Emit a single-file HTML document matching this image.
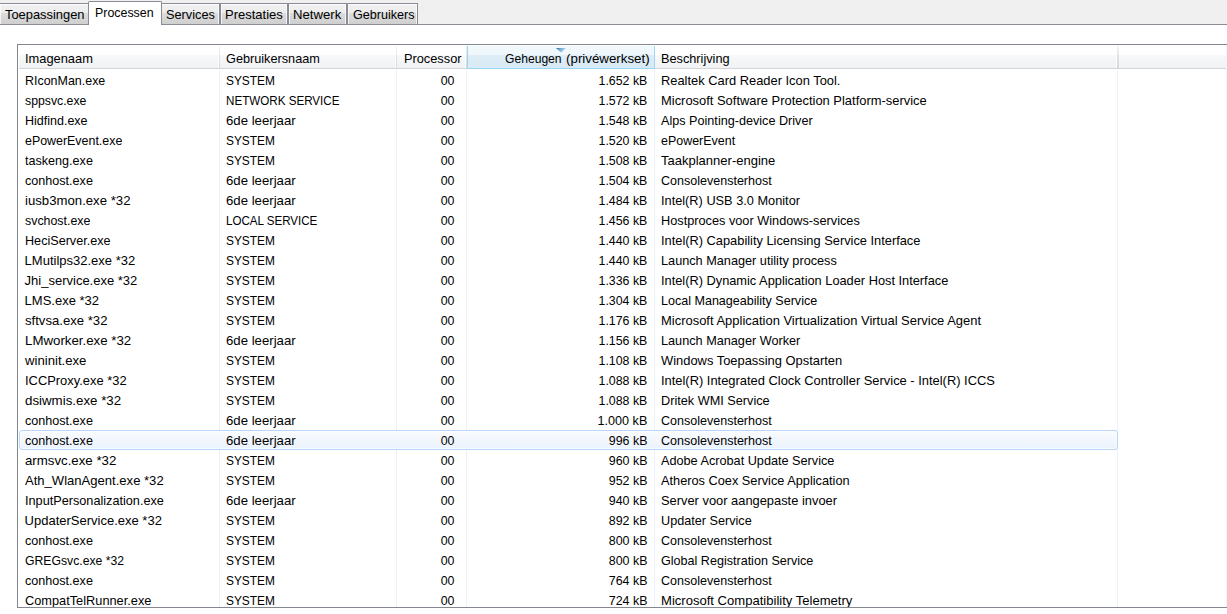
<!DOCTYPE html><html><head><meta charset="utf-8"><title>Taakbeheer</title><style>
html,body{margin:0;padding:0;overflow:hidden}
body{width:1227px;height:614px;overflow:hidden;position:relative;background:#fff;font-family:"Liberation Sans",sans-serif;font-size:13px;color:#000;}
.a{position:absolute;white-space:nowrap}
#strip{left:0;top:0;width:1227px;height:24px;background:#f0f0f0}
#strip-line{left:0;top:24px;width:1227px;height:1px;background:#8a8d94}
.tab{top:3px;height:21px;border:1px solid #898c95;border-bottom:none;border-radius:1px 1px 0 0;box-sizing:border-box;
 background:linear-gradient(#f2f2f2 0,#ebebeb 9px,#dddddd 9px,#cfcfcf 100%);box-shadow:inset 0 1px 0 #fcfcfc, inset 1px 0 0 rgba(255,255,255,.7), inset -1px 0 0 rgba(255,255,255,.7)}
.tt{position:absolute;line-height:15px;white-space:nowrap}
.atab{top:1px;height:24px;border:1px solid #898c95;border-bottom:none;border-radius:1.5px 1.5px 0 0;box-sizing:border-box;background:#fff}
#list{left:17px;top:44px;width:1210px;height:564px;box-sizing:border-box;border:1px solid #828790;border-right:none;background:#fff;overflow:hidden}
#hdr{left:1px;top:1px;width:1207px;height:22px;background:linear-gradient(#fff 0,#fff 9px,#f7f8fa 9px,#f1f2f4 100%);border-bottom:1px solid #d5d5d5}
.hs{top:1px;width:1px;height:22px;background:linear-gradient(#f4f4f5,#e0e1e3 50%,#d6d8db);box-shadow:-1px 0 0 #fff}
.hs2{top:0;width:1px;height:23px;background:#fff}
.ht{top:6px;line-height:15px}
.gl{top:25px;width:1px;height:540px;background:#ecf2fa}
.r{left:0;height:20px;width:1209px}
.c{top:3px;line-height:15px}
#sel{left:1px;top:385px;width:1099px;height:20px;box-sizing:border-box;border:1px solid #b8d6fb;border-radius:3px;background:linear-gradient(#fafbfd,#ebf3fd);box-shadow:inset 0 0 0 1px rgba(255,255,255,.6)}
#sorth{left:449px;top:1px;width:188px;height:23px;box-sizing:border-box;border:1px solid #9bd6f5;border-top:none;background:linear-gradient(#f2f9fc 0,#eff7fc 9px,#deedf6 9px,#d8eaf5 100%)}
</style></head><body>
<div id="strip" class="a"></div><div id="strip-line" class="a"></div>
<div class="a tab" style="left:-1px;width:93px"><div class="tt" style="left:5px;top:3px"><span style="display:inline-block;transform:scaleX(0.9912);transform-origin:left center">Toepassingen</span></div></div>
<div class="a tab" style="left:159px;width:61px"><div class="tt" style="left:5.900000000000006px;top:3px"><span style="display:inline-block;transform:scaleX(0.9795);transform-origin:left center">Services</span></div></div>
<div class="a tab" style="left:220px;width:68px"><div class="tt" style="left:4.0px;top:3px"><span style="display:inline-block;transform:scaleX(1.0003);transform-origin:left center">Prestaties</span></div></div>
<div class="a tab" style="left:288px;width:59px"><div class="tt" style="left:4px;top:3px"><span style="display:inline-block;transform:scaleX(1.0111);transform-origin:left center">Netwerk</span></div></div>
<div class="a tab" style="left:347px;width:71px"><div class="tt" style="left:4.899999999999977px;top:3px"><span style="display:inline-block;transform:scaleX(0.9688);transform-origin:left center">Gebruikers</span></div></div>
<div class="a atab" style="left:88px;width:74px"><div class="tt" style="left:6.0px;top:3px"><span style="display:inline-block;transform:scaleX(0.9540);transform-origin:left center">Processen</span></div></div>
<div id="list" class="a">
<div id="hdr" class="a"></div>
<div id="sorth" class="a"></div>
<svg class="a" style="left:537px;top:2px" width="12" height="7" viewBox="0 0 12 7"><defs><linearGradient id="g" x1="0" y1="0" x2="1" y2="0.4"><stop offset="0" stop-color="#2f5a75"/><stop offset="0.45" stop-color="#74aed0"/><stop offset="1" stop-color="#b2d8ee"/></linearGradient></defs><path d="M1 1 L11 1 L6 5.6 Z" fill="url(#g)"/></svg>
<div class="a hs" style="left:201px;width:1px"></div>
<div class="a gl" style="left:201px"></div>
<div class="a hs" style="left:378px;width:1px"></div>
<div class="a gl" style="left:378px"></div>
<div class="a hs" style="left:1099px;width:2px"></div>
<div class="a gl" style="left:1099px"></div>
<div class="a hs" style="left:448px"></div>
<div class="a gl" style="left:448px"></div>
<div class="a gl" style="left:636px"></div>
<div class="a ht" style="left:6.600000000000001px"><span style="display:inline-block;transform:scaleX(0.9882);transform-origin:left center">Imagenaam</span></div>
<div class="a ht" style="left:207.6px"><span style="display:inline-block;transform:scaleX(0.9768);transform-origin:left center">Gebruikersnaam</span></div>
<div class="a ht" style="right:765px"><span style="display:inline-block;transform:scaleX(0.9841);transform-origin:right center">Processor</span></div>
<div class="a ht" style="left:486.6px"><span style="display:inline-block;transform:scaleX(0.9321);transform-origin:left center">Geheugen</span></div>
<div class="a ht" style="right:577.3px"><span style="display:inline-block;transform:scaleX(1.0235);transform-origin:right center">(privéwerkset)</span></div>
<div class="a ht" style="left:642.6px"><span style="display:inline-block;transform:scaleX(0.9783);transform-origin:left center">Beschrijving</span></div>
<div class="a" style="left:1208px;top:1px;width:1px;height:561px;background:#f4f4f4"></div>
<div id="sel" class="a"></div>
<div class="a r" style="top:25px"><div class="a c" style="left:6.600000000000001px"><span style="display:inline-block;transform:scaleX(0.9578);transform-origin:left center">RIconMan.exe</span></div><div class="a c" style="left:207.6px"><span style="display:inline-block;transform:scaleX(0.9134);transform-origin:left center">SYSTEM</span></div><div class="a c" style="right:772.2px"><span style="display:inline-block;transform:scaleX(0.9520);transform-origin:right center">00</span></div><div class="a c" style="right:580.0px"><span style="display:inline-block;transform:scaleX(0.9500);transform-origin:right center">1.652 kB</span></div><div class="a c" style="left:642.6px"><span style="display:inline-block;transform:scaleX(0.9906);transform-origin:left center">Realtek Card Reader Icon Tool.</span></div></div>
<div class="a r" style="top:45px"><div class="a c" style="left:6.600000000000001px"><span style="display:inline-block;transform:scaleX(0.9431);transform-origin:left center">sppsvc.exe</span></div><div class="a c" style="left:207.6px"><span style="display:inline-block;transform:scaleX(0.8945);transform-origin:left center">NETWORK SERVICE</span></div><div class="a c" style="right:772.2px"><span style="display:inline-block;transform:scaleX(0.9520);transform-origin:right center">00</span></div><div class="a c" style="right:580.0px"><span style="display:inline-block;transform:scaleX(0.9500);transform-origin:right center">1.572 kB</span></div><div class="a c" style="left:642.6px"><span style="display:inline-block;transform:scaleX(0.9940);transform-origin:left center">Microsoft Software Protection Platform-service</span></div></div>
<div class="a r" style="top:65px"><div class="a c" style="left:6.600000000000001px"><span style="display:inline-block;transform:scaleX(0.9615);transform-origin:left center">Hidfind.exe</span></div><div class="a c" style="left:207.6px"><span style="display:inline-block;transform:scaleX(1.0145);transform-origin:left center">6de leerjaar</span></div><div class="a c" style="right:772.2px"><span style="display:inline-block;transform:scaleX(0.9520);transform-origin:right center">00</span></div><div class="a c" style="right:580.0px"><span style="display:inline-block;transform:scaleX(0.9500);transform-origin:right center">1.548 kB</span></div><div class="a c" style="left:642.6px"><span style="display:inline-block;transform:scaleX(0.9718);transform-origin:left center">Alps Pointing-device Driver</span></div></div>
<div class="a r" style="top:85px"><div class="a c" style="left:6.600000000000001px"><span style="display:inline-block;transform:scaleX(0.9549);transform-origin:left center">ePowerEvent.exe</span></div><div class="a c" style="left:207.6px"><span style="display:inline-block;transform:scaleX(0.9134);transform-origin:left center">SYSTEM</span></div><div class="a c" style="right:772.2px"><span style="display:inline-block;transform:scaleX(0.9520);transform-origin:right center">00</span></div><div class="a c" style="right:580.0px"><span style="display:inline-block;transform:scaleX(0.9500);transform-origin:right center">1.520 kB</span></div><div class="a c" style="left:642.6px"><span style="display:inline-block;transform:scaleX(0.9584);transform-origin:left center">ePowerEvent</span></div></div>
<div class="a r" style="top:105px"><div class="a c" style="left:6.600000000000001px"><span style="display:inline-block;transform:scaleX(0.9686);transform-origin:left center">taskeng.exe</span></div><div class="a c" style="left:207.6px"><span style="display:inline-block;transform:scaleX(0.9134);transform-origin:left center">SYSTEM</span></div><div class="a c" style="right:772.2px"><span style="display:inline-block;transform:scaleX(0.9520);transform-origin:right center">00</span></div><div class="a c" style="right:580.0px"><span style="display:inline-block;transform:scaleX(0.9500);transform-origin:right center">1.508 kB</span></div><div class="a c" style="left:642.6px"><span style="display:inline-block;transform:scaleX(1.0010);transform-origin:left center">Taakplanner-engine</span></div></div>
<div class="a r" style="top:125px"><div class="a c" style="left:6.600000000000001px"><span style="display:inline-block;transform:scaleX(0.9686);transform-origin:left center">conhost.exe</span></div><div class="a c" style="left:207.6px"><span style="display:inline-block;transform:scaleX(1.0145);transform-origin:left center">6de leerjaar</span></div><div class="a c" style="right:772.2px"><span style="display:inline-block;transform:scaleX(0.9520);transform-origin:right center">00</span></div><div class="a c" style="right:580.0px"><span style="display:inline-block;transform:scaleX(0.9500);transform-origin:right center">1.504 kB</span></div><div class="a c" style="left:642.6px"><span style="display:inline-block;transform:scaleX(0.9635);transform-origin:left center">Consolevensterhost</span></div></div>
<div class="a r" style="top:145px"><div class="a c" style="left:6.600000000000001px"><span style="display:inline-block;transform:scaleX(1.0135);transform-origin:left center">iusb3mon.exe *32</span></div><div class="a c" style="left:207.6px"><span style="display:inline-block;transform:scaleX(1.0145);transform-origin:left center">6de leerjaar</span></div><div class="a c" style="right:772.2px"><span style="display:inline-block;transform:scaleX(0.9520);transform-origin:right center">00</span></div><div class="a c" style="right:580.0px"><span style="display:inline-block;transform:scaleX(0.9500);transform-origin:right center">1.484 kB</span></div><div class="a c" style="left:642.6px"><span style="display:inline-block;transform:scaleX(0.9817);transform-origin:left center">Intel(R) USB 3.0 Monitor</span></div></div>
<div class="a r" style="top:165px"><div class="a c" style="left:6.600000000000001px"><span style="display:inline-block;transform:scaleX(0.9530);transform-origin:left center">svchost.exe</span></div><div class="a c" style="left:207.6px"><span style="display:inline-block;transform:scaleX(0.8902);transform-origin:left center">LOCAL SERVICE</span></div><div class="a c" style="right:772.2px"><span style="display:inline-block;transform:scaleX(0.9520);transform-origin:right center">00</span></div><div class="a c" style="right:580.0px"><span style="display:inline-block;transform:scaleX(0.9500);transform-origin:right center">1.456 kB</span></div><div class="a c" style="left:642.6px"><span style="display:inline-block;transform:scaleX(0.9793);transform-origin:left center">Hostproces voor Windows-services</span></div></div>
<div class="a r" style="top:185px"><div class="a c" style="left:6.600000000000001px"><span style="display:inline-block;transform:scaleX(0.9705);transform-origin:left center">HeciServer.exe</span></div><div class="a c" style="left:207.6px"><span style="display:inline-block;transform:scaleX(0.9134);transform-origin:left center">SYSTEM</span></div><div class="a c" style="right:772.2px"><span style="display:inline-block;transform:scaleX(0.9520);transform-origin:right center">00</span></div><div class="a c" style="right:580.0px"><span style="display:inline-block;transform:scaleX(0.9500);transform-origin:right center">1.440 kB</span></div><div class="a c" style="left:642.6px"><span style="display:inline-block;transform:scaleX(0.9863);transform-origin:left center">Intel(R) Capability Licensing Service Interface</span></div></div>
<div class="a r" style="top:205px"><div class="a c" style="left:6.600000000000001px"><span style="display:inline-block;transform:scaleX(1.0000);transform-origin:left center">LMutilps32.exe *32</span></div><div class="a c" style="left:207.6px"><span style="display:inline-block;transform:scaleX(0.9134);transform-origin:left center">SYSTEM</span></div><div class="a c" style="right:772.2px"><span style="display:inline-block;transform:scaleX(0.9520);transform-origin:right center">00</span></div><div class="a c" style="right:580.0px"><span style="display:inline-block;transform:scaleX(0.9500);transform-origin:right center">1.440 kB</span></div><div class="a c" style="left:642.6px"><span style="display:inline-block;transform:scaleX(0.9772);transform-origin:left center">Launch Manager utility process</span></div></div>
<div class="a r" style="top:225px"><div class="a c" style="left:6.600000000000001px"><span style="display:inline-block;transform:scaleX(1.0000);transform-origin:left center">Jhi_service.exe *32</span></div><div class="a c" style="left:207.6px"><span style="display:inline-block;transform:scaleX(0.9134);transform-origin:left center">SYSTEM</span></div><div class="a c" style="right:772.2px"><span style="display:inline-block;transform:scaleX(0.9520);transform-origin:right center">00</span></div><div class="a c" style="right:580.0px"><span style="display:inline-block;transform:scaleX(0.9500);transform-origin:right center">1.336 kB</span></div><div class="a c" style="left:642.6px"><span style="display:inline-block;transform:scaleX(0.9842);transform-origin:left center">Intel(R) Dynamic Application Loader Host Interface</span></div></div>
<div class="a r" style="top:245px"><div class="a c" style="left:6.600000000000001px"><span style="display:inline-block;transform:scaleX(1.0000);transform-origin:left center">LMS.exe *32</span></div><div class="a c" style="left:207.6px"><span style="display:inline-block;transform:scaleX(0.9134);transform-origin:left center">SYSTEM</span></div><div class="a c" style="right:772.2px"><span style="display:inline-block;transform:scaleX(0.9520);transform-origin:right center">00</span></div><div class="a c" style="right:580.0px"><span style="display:inline-block;transform:scaleX(0.9500);transform-origin:right center">1.304 kB</span></div><div class="a c" style="left:642.6px"><span style="display:inline-block;transform:scaleX(0.9648);transform-origin:left center">Local Manageability Service</span></div></div>
<div class="a r" style="top:265px"><div class="a c" style="left:6.600000000000001px"><span style="display:inline-block;transform:scaleX(1.0099);transform-origin:left center">sftvsa.exe *32</span></div><div class="a c" style="left:207.6px"><span style="display:inline-block;transform:scaleX(0.9134);transform-origin:left center">SYSTEM</span></div><div class="a c" style="right:772.2px"><span style="display:inline-block;transform:scaleX(0.9520);transform-origin:right center">00</span></div><div class="a c" style="right:580.0px"><span style="display:inline-block;transform:scaleX(0.9500);transform-origin:right center">1.176 kB</span></div><div class="a c" style="left:642.6px"><span style="display:inline-block;transform:scaleX(0.9969);transform-origin:left center">Microsoft Application Virtualization Virtual Service Agent</span></div></div>
<div class="a r" style="top:285px"><div class="a c" style="left:6.600000000000001px"><span style="display:inline-block;transform:scaleX(1.0212);transform-origin:left center">LMworker.exe *32</span></div><div class="a c" style="left:207.6px"><span style="display:inline-block;transform:scaleX(1.0145);transform-origin:left center">6de leerjaar</span></div><div class="a c" style="right:772.2px"><span style="display:inline-block;transform:scaleX(0.9520);transform-origin:right center">00</span></div><div class="a c" style="right:580.0px"><span style="display:inline-block;transform:scaleX(0.9500);transform-origin:right center">1.156 kB</span></div><div class="a c" style="left:642.6px"><span style="display:inline-block;transform:scaleX(0.9755);transform-origin:left center">Launch Manager Worker</span></div></div>
<div class="a r" style="top:305px"><div class="a c" style="left:6.600000000000001px"><span style="display:inline-block;transform:scaleX(1.0117);transform-origin:left center">wininit.exe</span></div><div class="a c" style="left:207.6px"><span style="display:inline-block;transform:scaleX(0.9134);transform-origin:left center">SYSTEM</span></div><div class="a c" style="right:772.2px"><span style="display:inline-block;transform:scaleX(0.9520);transform-origin:right center">00</span></div><div class="a c" style="right:580.0px"><span style="display:inline-block;transform:scaleX(0.9500);transform-origin:right center">1.108 kB</span></div><div class="a c" style="left:642.6px"><span style="display:inline-block;transform:scaleX(0.9923);transform-origin:left center">Windows Toepassing Opstarten</span></div></div>
<div class="a r" style="top:325px"><div class="a c" style="left:6.600000000000001px"><span style="display:inline-block;transform:scaleX(0.9922);transform-origin:left center">ICCProxy.exe *32</span></div><div class="a c" style="left:207.6px"><span style="display:inline-block;transform:scaleX(0.9134);transform-origin:left center">SYSTEM</span></div><div class="a c" style="right:772.2px"><span style="display:inline-block;transform:scaleX(0.9520);transform-origin:right center">00</span></div><div class="a c" style="right:580.0px"><span style="display:inline-block;transform:scaleX(0.9500);transform-origin:right center">1.088 kB</span></div><div class="a c" style="left:642.6px"><span style="display:inline-block;transform:scaleX(0.9917);transform-origin:left center">Intel(R) Integrated Clock Controller Service - Intel(R) ICCS</span></div></div>
<div class="a r" style="top:345px"><div class="a c" style="left:6.600000000000001px"><span style="display:inline-block;transform:scaleX(1.0234);transform-origin:left center">dsiwmis.exe *32</span></div><div class="a c" style="left:207.6px"><span style="display:inline-block;transform:scaleX(0.9134);transform-origin:left center">SYSTEM</span></div><div class="a c" style="right:772.2px"><span style="display:inline-block;transform:scaleX(0.9520);transform-origin:right center">00</span></div><div class="a c" style="right:580.0px"><span style="display:inline-block;transform:scaleX(0.9500);transform-origin:right center">1.088 kB</span></div><div class="a c" style="left:642.6px"><span style="display:inline-block;transform:scaleX(0.9766);transform-origin:left center">Dritek WMI Service</span></div></div>
<div class="a r" style="top:365px"><div class="a c" style="left:6.600000000000001px"><span style="display:inline-block;transform:scaleX(0.9686);transform-origin:left center">conhost.exe</span></div><div class="a c" style="left:207.6px"><span style="display:inline-block;transform:scaleX(1.0145);transform-origin:left center">6de leerjaar</span></div><div class="a c" style="right:772.2px"><span style="display:inline-block;transform:scaleX(0.9520);transform-origin:right center">00</span></div><div class="a c" style="right:580.0px"><span style="display:inline-block;transform:scaleX(0.9698);transform-origin:right center">1.000 kB</span></div><div class="a c" style="left:642.6px"><span style="display:inline-block;transform:scaleX(0.9635);transform-origin:left center">Consolevensterhost</span></div></div>
<div class="a r" style="top:385px"><div class="a c" style="left:6.600000000000001px"><span style="display:inline-block;transform:scaleX(0.9686);transform-origin:left center">conhost.exe</span></div><div class="a c" style="left:207.6px"><span style="display:inline-block;transform:scaleX(1.0145);transform-origin:left center">6de leerjaar</span></div><div class="a c" style="right:772.2px"><span style="display:inline-block;transform:scaleX(0.9520);transform-origin:right center">00</span></div><div class="a c" style="right:580.0px"><span style="display:inline-block;transform:scaleX(0.9560);transform-origin:right center">996 kB</span></div><div class="a c" style="left:642.6px"><span style="display:inline-block;transform:scaleX(0.9635);transform-origin:left center">Consolevensterhost</span></div></div>
<div class="a r" style="top:405px"><div class="a c" style="left:6.600000000000001px"><span style="display:inline-block;transform:scaleX(1.0191);transform-origin:left center">armsvc.exe *32</span></div><div class="a c" style="left:207.6px"><span style="display:inline-block;transform:scaleX(0.9134);transform-origin:left center">SYSTEM</span></div><div class="a c" style="right:772.2px"><span style="display:inline-block;transform:scaleX(0.9520);transform-origin:right center">00</span></div><div class="a c" style="right:580.0px"><span style="display:inline-block;transform:scaleX(0.9560);transform-origin:right center">960 kB</span></div><div class="a c" style="left:642.6px"><span style="display:inline-block;transform:scaleX(0.9752);transform-origin:left center">Adobe Acrobat Update Service</span></div></div>
<div class="a r" style="top:425px"><div class="a c" style="left:6.600000000000001px"><span style="display:inline-block;transform:scaleX(1.0044);transform-origin:left center">Ath_WlanAgent.exe *32</span></div><div class="a c" style="left:207.6px"><span style="display:inline-block;transform:scaleX(0.9134);transform-origin:left center">SYSTEM</span></div><div class="a c" style="right:772.2px"><span style="display:inline-block;transform:scaleX(0.9520);transform-origin:right center">00</span></div><div class="a c" style="right:580.0px"><span style="display:inline-block;transform:scaleX(0.9560);transform-origin:right center">952 kB</span></div><div class="a c" style="left:642.6px"><span style="display:inline-block;transform:scaleX(0.9813);transform-origin:left center">Atheros Coex Service Application</span></div></div>
<div class="a r" style="top:445px"><div class="a c" style="left:6.600000000000001px"><span style="display:inline-block;transform:scaleX(0.9754);transform-origin:left center">InputPersonalization.exe</span></div><div class="a c" style="left:207.6px"><span style="display:inline-block;transform:scaleX(1.0145);transform-origin:left center">6de leerjaar</span></div><div class="a c" style="right:772.2px"><span style="display:inline-block;transform:scaleX(0.9520);transform-origin:right center">00</span></div><div class="a c" style="right:580.0px"><span style="display:inline-block;transform:scaleX(0.9560);transform-origin:right center">940 kB</span></div><div class="a c" style="left:642.6px"><span style="display:inline-block;transform:scaleX(0.9899);transform-origin:left center">Server voor aangepaste invoer</span></div></div>
<div class="a r" style="top:465px"><div class="a c" style="left:6.600000000000001px"><span style="display:inline-block;transform:scaleX(1.0000);transform-origin:left center">UpdaterService.exe *32</span></div><div class="a c" style="left:207.6px"><span style="display:inline-block;transform:scaleX(0.9134);transform-origin:left center">SYSTEM</span></div><div class="a c" style="right:772.2px"><span style="display:inline-block;transform:scaleX(0.9520);transform-origin:right center">00</span></div><div class="a c" style="right:580.0px"><span style="display:inline-block;transform:scaleX(0.9560);transform-origin:right center">892 kB</span></div><div class="a c" style="left:642.6px"><span style="display:inline-block;transform:scaleX(0.9731);transform-origin:left center">Updater Service</span></div></div>
<div class="a r" style="top:485px"><div class="a c" style="left:6.600000000000001px"><span style="display:inline-block;transform:scaleX(0.9686);transform-origin:left center">conhost.exe</span></div><div class="a c" style="left:207.6px"><span style="display:inline-block;transform:scaleX(0.9134);transform-origin:left center">SYSTEM</span></div><div class="a c" style="right:772.2px"><span style="display:inline-block;transform:scaleX(0.9520);transform-origin:right center">00</span></div><div class="a c" style="right:580.0px"><span style="display:inline-block;transform:scaleX(0.9560);transform-origin:right center">800 kB</span></div><div class="a c" style="left:642.6px"><span style="display:inline-block;transform:scaleX(0.9635);transform-origin:left center">Consolevensterhost</span></div></div>
<div class="a r" style="top:505px"><div class="a c" style="left:6.600000000000001px"><span style="display:inline-block;transform:scaleX(0.9390);transform-origin:left center">GREGsvc.exe *32</span></div><div class="a c" style="left:207.6px"><span style="display:inline-block;transform:scaleX(0.9134);transform-origin:left center">SYSTEM</span></div><div class="a c" style="right:772.2px"><span style="display:inline-block;transform:scaleX(0.9520);transform-origin:right center">00</span></div><div class="a c" style="right:580.0px"><span style="display:inline-block;transform:scaleX(0.9560);transform-origin:right center">800 kB</span></div><div class="a c" style="left:642.6px"><span style="display:inline-block;transform:scaleX(0.9669);transform-origin:left center">Global Registration Service</span></div></div>
<div class="a r" style="top:525px"><div class="a c" style="left:6.600000000000001px"><span style="display:inline-block;transform:scaleX(0.9686);transform-origin:left center">conhost.exe</span></div><div class="a c" style="left:207.6px"><span style="display:inline-block;transform:scaleX(0.9134);transform-origin:left center">SYSTEM</span></div><div class="a c" style="right:772.2px"><span style="display:inline-block;transform:scaleX(0.9520);transform-origin:right center">00</span></div><div class="a c" style="right:580.0px"><span style="display:inline-block;transform:scaleX(0.9560);transform-origin:right center">764 kB</span></div><div class="a c" style="left:642.6px"><span style="display:inline-block;transform:scaleX(0.9635);transform-origin:left center">Consolevensterhost</span></div></div>
<div class="a r" style="top:545px"><div class="a c" style="left:6.600000000000001px"><span style="display:inline-block;transform:scaleX(0.9828);transform-origin:left center">CompatTelRunner.exe</span></div><div class="a c" style="left:207.6px"><span style="display:inline-block;transform:scaleX(0.9134);transform-origin:left center">SYSTEM</span></div><div class="a c" style="right:772.2px"><span style="display:inline-block;transform:scaleX(0.9520);transform-origin:right center">00</span></div><div class="a c" style="right:580.0px"><span style="display:inline-block;transform:scaleX(0.9560);transform-origin:right center">724 kB</span></div><div class="a c" style="left:642.6px"><span style="display:inline-block;transform:scaleX(1.0047);transform-origin:left center">Microsoft Compatibility Telemetry</span></div></div>
</div>
</body></html>
